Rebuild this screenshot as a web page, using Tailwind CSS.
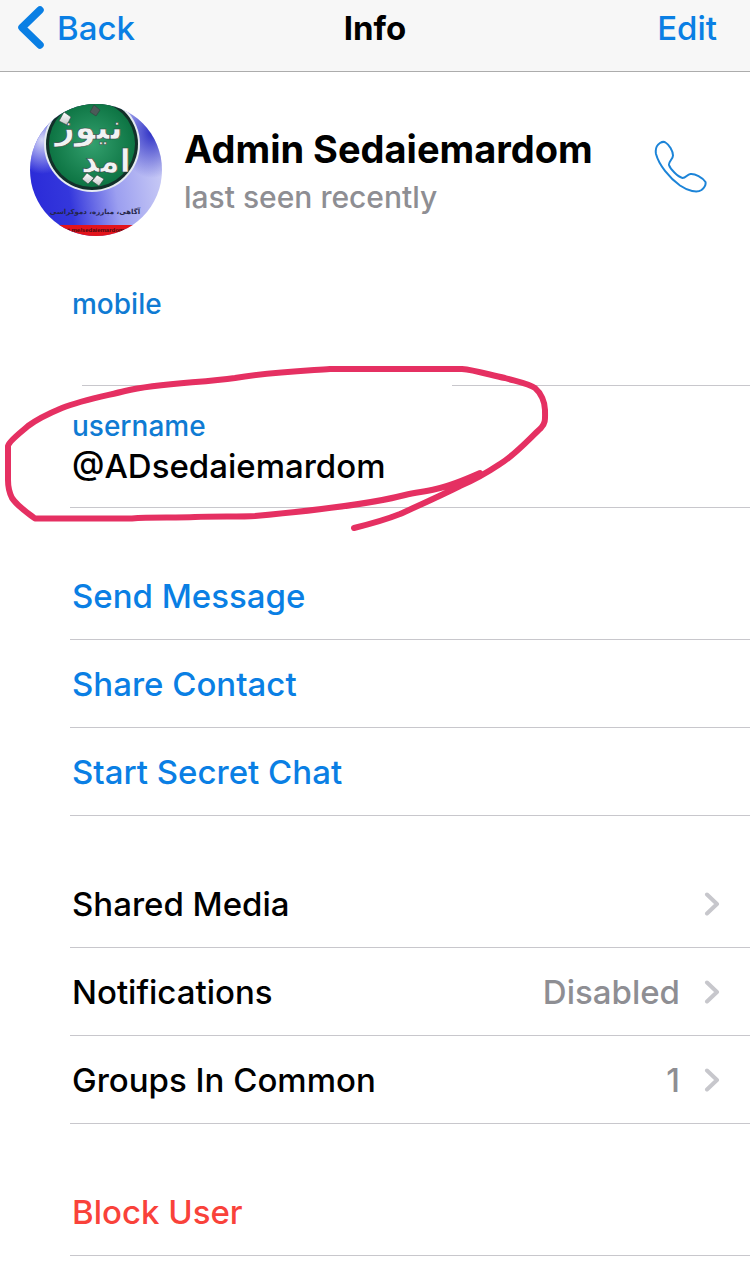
<!DOCTYPE html>
<html lang="en">
<head>
  <meta charset="UTF-8" />
  <meta name="viewport" content="width=device-width, initial-scale=1.0" />
  <title>Info</title>
  <script src="https://cdn.jsdelivr.net/npm/@tailwindcss/browser@4"></script>
</head>
<body class="bg-white font-[Inter,sans-serif] font-medium text-[33px] leading-10 text-black overflow-x-hidden">

  <!-- Navigation bar -->
  <header class="grid grid-cols-3 items-center pb-[15px] bg-[#f7f7f7] border-b border-[#acacac]">
    <a href="#" class="flex items-center gap-3 h-14 pl-[17px] text-[#0a7fe4]">
      <svg class="w-7 h-12" viewBox="0 0 28 48" fill="none" stroke="currentColor" stroke-width="7.5" stroke-linecap="round" stroke-linejoin="round"><path d="M23 6 5 23.500 23 41" /></svg>
      Back
    </a>
    <h1 class="text-center font-bold">Info</h1>
    <button type="button" class="justify-self-end pr-[33px] text-[#0a7fe4]">Edit</button>
  </header>

  <main>
    <!-- Profile -->
    <section class="flex items-start pt-8 pl-[30px] pr-[42px]">
      <svg class="size-[132px] shrink-0" viewBox="0 0 132 132" role="img" aria-label="Profile photo">
        <defs>
          <clipPath id="round"><circle cx="66" cy="66" r="66" /></clipPath>
          <linearGradient id="sky" x1="0" y1="0.75" x2="1" y2="0.6">
            <stop offset="0" stop-color="#2a2ad8" />
            <stop offset="0.3" stop-color="#3437dc" />
            <stop offset="0.65" stop-color="#9c9ff0" />
            <stop offset="1" stop-color="#c6c8f5" />
          </linearGradient>
          <radialGradient id="haze">
            <stop offset="0" stop-color="#d5d7f8" />
            <stop offset="1" stop-color="#d5d7f8" stop-opacity="0" />
          </radialGradient>
          <radialGradient id="dusk">
            <stop offset="0" stop-color="#2c2fc4" />
            <stop offset="1" stop-color="#2c2fc4" stop-opacity="0" />
          </radialGradient>
          <radialGradient id="green">
            <stop offset="0" stop-color="#33a06e" />
            <stop offset="1" stop-color="#0d7443" />
          </radialGradient>
          <linearGradient id="silver" x1="0" y1="0" x2="0" y2="1">
            <stop offset="0" stop-color="#ffffff" />
            <stop offset="1" stop-color="#c4c8c8" />
          </linearGradient>
        </defs>
        <g clip-path="url(#round)">
          <rect width="132" height="132" fill="url(#sky)" />
          <ellipse cx="12" cy="36" rx="30" ry="34" fill="url(#haze)" />
          <ellipse cx="122" cy="28" rx="34" ry="46" fill="url(#dusk)" />
          <circle cx="62" cy="40" r="48" fill="#e6ebf2" />
          <circle cx="62" cy="40" r="46" fill="#12302a" />
          <circle cx="62" cy="40" r="43" fill="url(#green)" />
          <g fill="url(#silver)" stroke="#33423d" stroke-width="0.6">
            <path d="M34 8 41 13 37 21 29 17Z" />
            <path d="M57 69 64 74 58 80 52 75Z" />
            <path d="M67 71 74 75 69 82 62 77Z" />
            <path d="M64 1 70 6 66 12 60 8Z" fill="#4c5a58" />
          </g>
          <g fill="#f1f3f3" stroke="#33423d" stroke-width="0.6" font-family="DejaVu Sans" font-weight="700" text-anchor="middle">
            <text x="59" y="35" font-size="34">نیوز</text>
            <text x="76" y="68" font-size="32">امد</text>
          </g>
          <text x="65" y="110" font-family="DejaVu Sans" font-weight="700" font-size="7" fill="#24264a" text-anchor="middle">آگاهی، مبارزه، دموکراسی</text>
          <rect y="121" width="132" height="11" fill="#e3141c" />
          <text x="66" y="128" font-family="Liberation Sans" font-weight="700" font-size="6" fill="#4a0a0c" text-anchor="middle">t.me/sedaiemardom</text>
        </g>
      </svg>
      <div class="flex-1 pl-[22px] pt-[21px]">
        <h2 class="text-[38px] leading-12 font-bold">Admin Sedaiemardom</h2>
        <p class="text-[30px] leading-12 text-[#8e8e93]">last seen recently</p>
      </div>
      <button type="button" aria-label="Call" class="mt-9 text-[#1c84d8]">
        <svg class="size-[54px]" viewBox="0 0 54 54" fill="none" stroke="currentColor" stroke-width="2" stroke-linejoin="round"><path d="M6 3C3 5 1 8.500 2 14C5 25 15 37.500 26 45.500C34 51 43 53 47.500 50C50.500 47.500 52 44.500 51.500 42C48.500 37.500 41 33.500 36.500 34C33 34.500 32 38 28.500 38C24 37 16.500 29.500 15 25C14.500 21.500 19 19 19 15.500C19 11 15 4.500 11.500 2.500C10 1.500 8 1.800 6 3Z" /></svg>
      </button>
    </section>

    <!-- Contact details -->
    <section class="relative mt-7">
      <dl>
        <div class="relative h-[122px] pt-5 ml-[70px] pl-[2px]">
          <dt class="text-[28px] text-[#0f7bd3]">mobile</dt>
          <dd class="h-10"></dd>
          <div class="absolute bottom-0 inset-x-0 flex">
            <span class="ml-3 w-20 h-px bg-[#c8c7cc]"></span>
            <span class="ml-[290px] flex-1 h-px bg-[#c8c7cc]"></span>
          </div>
        </div>
        <div class="h-[122px] pt-5 ml-[70px] pl-[2px] border-b border-[#c8c7cc]">
          <dt class="text-[28px] text-[#0f7bd3]">username</dt>
          <dd>@ADsedaiemardom</dd>
        </div>
      </dl>
      <!-- Hand-drawn ring round the username -->
      <svg class="absolute left-0 top-24 w-[560px] h-[180px] pointer-events-none" viewBox="0 360 560 180" fill="none" stroke="#e53062" stroke-width="6" stroke-linecap="round" stroke-linejoin="round" aria-hidden="true">
        <path d="M480 473C462 481 450 486 436 489C424 492 416 492 405 495C370 504 310 511 255 516C240 517 215 516 195 517C175 518 150 517 132 518.500L35 518.500C28 513 18 507 12 498C9 492 8 488 8 480L8 446C9 441 20 433 28 426C36 420 50 413 62 408C82 400 105 396 125 391C160 383 200 383 235 378C270 372 300 371 330 369L462 369C475 370 490 375 505 378C515 381 530 384 535 388C541 393 545 402 545 410C545 418 546 423 541 428C530 438 515 455 500 464C485 474 472 481 460 486C438 497 420 505 400 514C385 520 370 524 354 528" />
      </svg>
    </section>

    <!-- Actions -->
    <ul class="mt-11 ml-[70px] text-[#0a7fe4]">
      <li class="border-b border-[#c8c7cc]"><button type="button" class="w-full h-[87px] pl-[2px] text-left">Send Message</button></li>
      <li class="border-b border-[#c8c7cc]"><button type="button" class="w-full h-[87px] pl-[2px] text-left">Share Contact</button></li>
      <li class="border-b border-[#c8c7cc]"><button type="button" class="w-full h-[87px] pl-[2px] text-left">Start Secret Chat</button></li>
    </ul>

    <!-- Settings -->
    <ul class="mt-11 ml-[70px]">
      <li class="border-b border-[#c8c7cc]">
        <a href="#" class="flex items-center h-[87px] pl-[2px] pr-[30px]">
          <span class="flex-1">Shared Media</span>
          <svg class="w-4 h-6 text-[#c7c7cc]" viewBox="0 0 16 24" fill="none" stroke="currentColor" stroke-width="4" stroke-linecap="round" stroke-linejoin="round"><path d="M3 2.500 13 12 3 21.500" /></svg>
        </a>
      </li>
      <li class="border-b border-[#c8c7cc]">
        <a href="#" class="flex items-center h-[87px] pl-[2px] pr-[30px]">
          <span class="flex-1">Notifications</span>
          <span class="mr-6 text-[#8e8e93]">Disabled</span>
          <svg class="w-4 h-6 text-[#c7c7cc]" viewBox="0 0 16 24" fill="none" stroke="currentColor" stroke-width="4" stroke-linecap="round" stroke-linejoin="round"><path d="M3 2.500 13 12 3 21.500" /></svg>
        </a>
      </li>
      <li class="border-b border-[#c8c7cc]">
        <a href="#" class="flex items-center h-[87px] pl-[2px] pr-[30px]">
          <span class="flex-1">Groups In Common</span>
          <span class="mr-6 text-[#8e8e93]">1</span>
          <svg class="w-4 h-6 text-[#c7c7cc]" viewBox="0 0 16 24" fill="none" stroke="currentColor" stroke-width="4" stroke-linecap="round" stroke-linejoin="round"><path d="M3 2.500 13 12 3 21.500" /></svg>
        </a>
      </li>
    </ul>

    <div class="mt-11 mb-[22px] ml-[70px] border-b border-[#c8c7cc]">
      <button type="button" class="w-full h-[87px] pl-[2px] text-left text-[#f9423a]">Block User</button>
    </div>
  </main>

</body>
</html>
